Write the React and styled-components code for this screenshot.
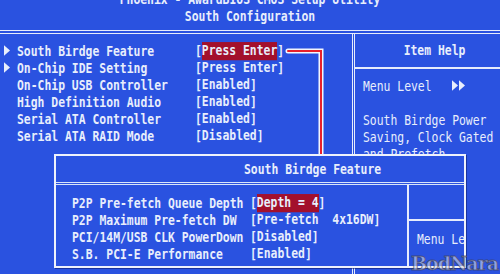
import React from 'react';
import styled, { createGlobalStyle } from 'styled-components';

const GlobalStyle = createGlobalStyle`
  html, body {
    margin: 0;
    padding: 0;
    background: #2a52e0;
  }
`;

const Screen = styled.div`
  position: relative;
  width: 500px;
  height: 274px;
  overflow: hidden;
  background: #2a52e0;
  color: #e8eefc;
  font-family: 'DejaVu Sans Mono', 'Liberation Mono', monospace;
  font-weight: bold;
  font-size: 11.4px;
`;

const Header = styled.div`
  height: 30px;
  border-bottom: 4px double #e6ecfc;
  display: flex;
  flex-direction: column;
  align-items: center;
`;

const Line = styled.div`
  height: 17px;
  line-height: 17px;
  white-space: pre;
  transform: scaleY(1.3);
  margin-top: ${(p) => p.$shift || 0}px;
`;

const Body = styled.div`
  display: grid;
  grid-template-columns: 352px 1fr;
  height: 240px;
`;

const Menu = styled.div`
  padding: 8px 0 0 4px;
`;

const Row = styled.div`
  display: flex;
  align-items: center;
  height: 17px;
  white-space: pre;
  transform: scaleY(1.3);
`;

const Marker = styled.span`
  width: 13px;
  display: flex;
  align-items: center;
`;

const Label = styled.span`
  width: ${(p) => p.$w}px;
`;

const Value = styled.span`
  display: inline-flex;
`;

const Hi = styled.span`
  background: ${(p) => (p.$on ? '#a3102c' : 'transparent')};
  line-height: 12px;
`;

const HelpPane = styled.div`
  border-left: 3px double #e6ecfc;
  display: flex;
  flex-direction: column;
`;

const HelpHead = styled.div`
  height: 33px;
  border-bottom: 2px solid #e6ecfc;
  display: flex;
  align-items: center;
  justify-content: center;
  padding-left: 14px;
`;

const HelpBody = styled.div`
  padding: 8px 0 0 8px;
  font-weight: normal;
`;

const Popup = styled.div`
  position: absolute;
  left: 54px;
  top: 154px;
  width: 408px;
  height: 110px;
  border: 2px solid #eef2fc;
  background: #2a52e0;
  display: flex;
  flex-direction: column;
  overflow: hidden;
  box-shadow: 1px 1px 0 rgba(10, 20, 90, 0.5);
`;

const PopTitle = styled.div`
  height: 26px;
  border-bottom: 3px double #d8e4fa;
  display: flex;
  align-items: center;
  padding-left: 188px;
`;

const PopBody = styled.div`
  flex: 1;
  display: grid;
  grid-template-columns: 351px 1fr;
`;

const PopList = styled.div`
  padding: 9px 0 0 16px;
`;

const PopSide = styled.div`
  border-left: 2px solid #e6ecfc;
  display: flex;
  flex-direction: column;
  overflow: hidden;
`;

const SideTop = styled.div`
  height: 34px;
  border-bottom: 2px solid #e6ecfc;
`;

const SideText = styled.div`
  padding: 9px 0 0 8px;
  font-weight: normal;
  white-space: pre;
`;

const Connector = styled.svg`
  position: absolute;
  left: 284px;
  top: 46px;
`;

const Watermark = styled.div`
  position: absolute;
  right: 2px;
  bottom: 1px;
  line-height: 20px;
  font-family: 'DejaVu Serif', serif;
  font-weight: bold;
  font-size: 19px;
  letter-spacing: -1px;
  color: rgba(214, 216, 230, 0.6);
  -webkit-text-stroke: 1px rgba(60, 60, 80, 0.65);
`;

const Tri = ({ count = 1 }) => (
  <svg width={count * 7} height="9" viewBox={`0 0 ${count * 7} 9`}>
    {Array.from({ length: count }).map((_, i) => (
      <polygon key={i} points={`${i * 7},0.5 ${i * 7 + 6},4.5 ${i * 7},8.5`} fill="#e8eefc" />
    ))}
  </svg>
);

const menu = [
  { label: 'South Birdge Feature', value: 'Press Enter', sub: true, on: true },
  { label: 'On-Chip IDE Setting', value: 'Press Enter', sub: true },
  { label: 'On-Chip USB Controller', value: 'Enabled' },
  { label: 'High Definition Audio', value: 'Enabled' },
  { label: 'Serial ATA Controller', value: 'Enabled' },
  { label: 'Serial ATA RAID Mode', value: 'Disabled' },
];

const popItems = [
  { label: 'P2P Pre-fetch Queue Depth', value: 'Depth = 4', on: true },
  { label: 'P2P Maximum Pre-fetch DW', value: 'Pre-fetch  4x16DW' },
  { label: 'PCI/14M/USB CLK PowerDown', value: 'Disabled' },
  { label: 'S.B. PCI-E Performance', value: 'Enabled' },
];

export default function App() {
  return (
    <Screen>
      <GlobalStyle />
      <Header>
        <Line $shift={-9}>Phoenix - AwardBIOS CMOS Setup Utility</Line>
        <Line>South Configuration</Line>
      </Header>
      <Body>
        <Menu>
          {menu.map((m) => (
            <Row key={m.label}>
              <Marker>{m.sub && <Tri />}</Marker>
              <Label $w={178}>{m.label}</Label>
              <Value>
                [<Hi $on={m.on}>{m.value}</Hi>]
              </Value>
            </Row>
          ))}
        </Menu>
        <HelpPane>
          <HelpHead>
            <Line>Item Help</Line>
          </HelpHead>
          <HelpBody>
            <Row>
              <Label $w={89}>Menu Level</Label>
              <Tri count={2} />
            </Row>
            <Row> </Row>
            <Row>South Birdge Power</Row>
            <Row>Saving, Clock Gated</Row>
            <Row>and Prefetch</Row>
          </HelpBody>
        </HelpPane>
      </Body>

      <Connector width="44" height="112" viewBox="0 0 44 112">
        <polyline points="4,5 37,5 37,112" fill="none" stroke="#f4f6fc" strokeWidth="5" strokeLinecap="round" />
        <polyline points="4,5 37,5 37,112" fill="none" stroke="#e8202c" strokeWidth="2" strokeLinecap="round" />
      </Connector>

      <Popup>
        <PopTitle>
          <Line>South Birdge Feature</Line>
        </PopTitle>
        <PopBody>
          <PopList>
            {popItems.map((p) => (
              <Row key={p.label}>
                <Label $w={178}>{p.label}</Label>
                <Value>
                  [<Hi $on={p.on}>{p.value}</Hi>]
                </Value>
              </Row>
            ))}
          </PopList>
          <PopSide>
            <SideTop />
            <SideText>
              <Row>Menu Level</Row>
            </SideText>
          </PopSide>
        </PopBody>
      </Popup>

      <Watermark>BodNara</Watermark>
    </Screen>
  );
}
